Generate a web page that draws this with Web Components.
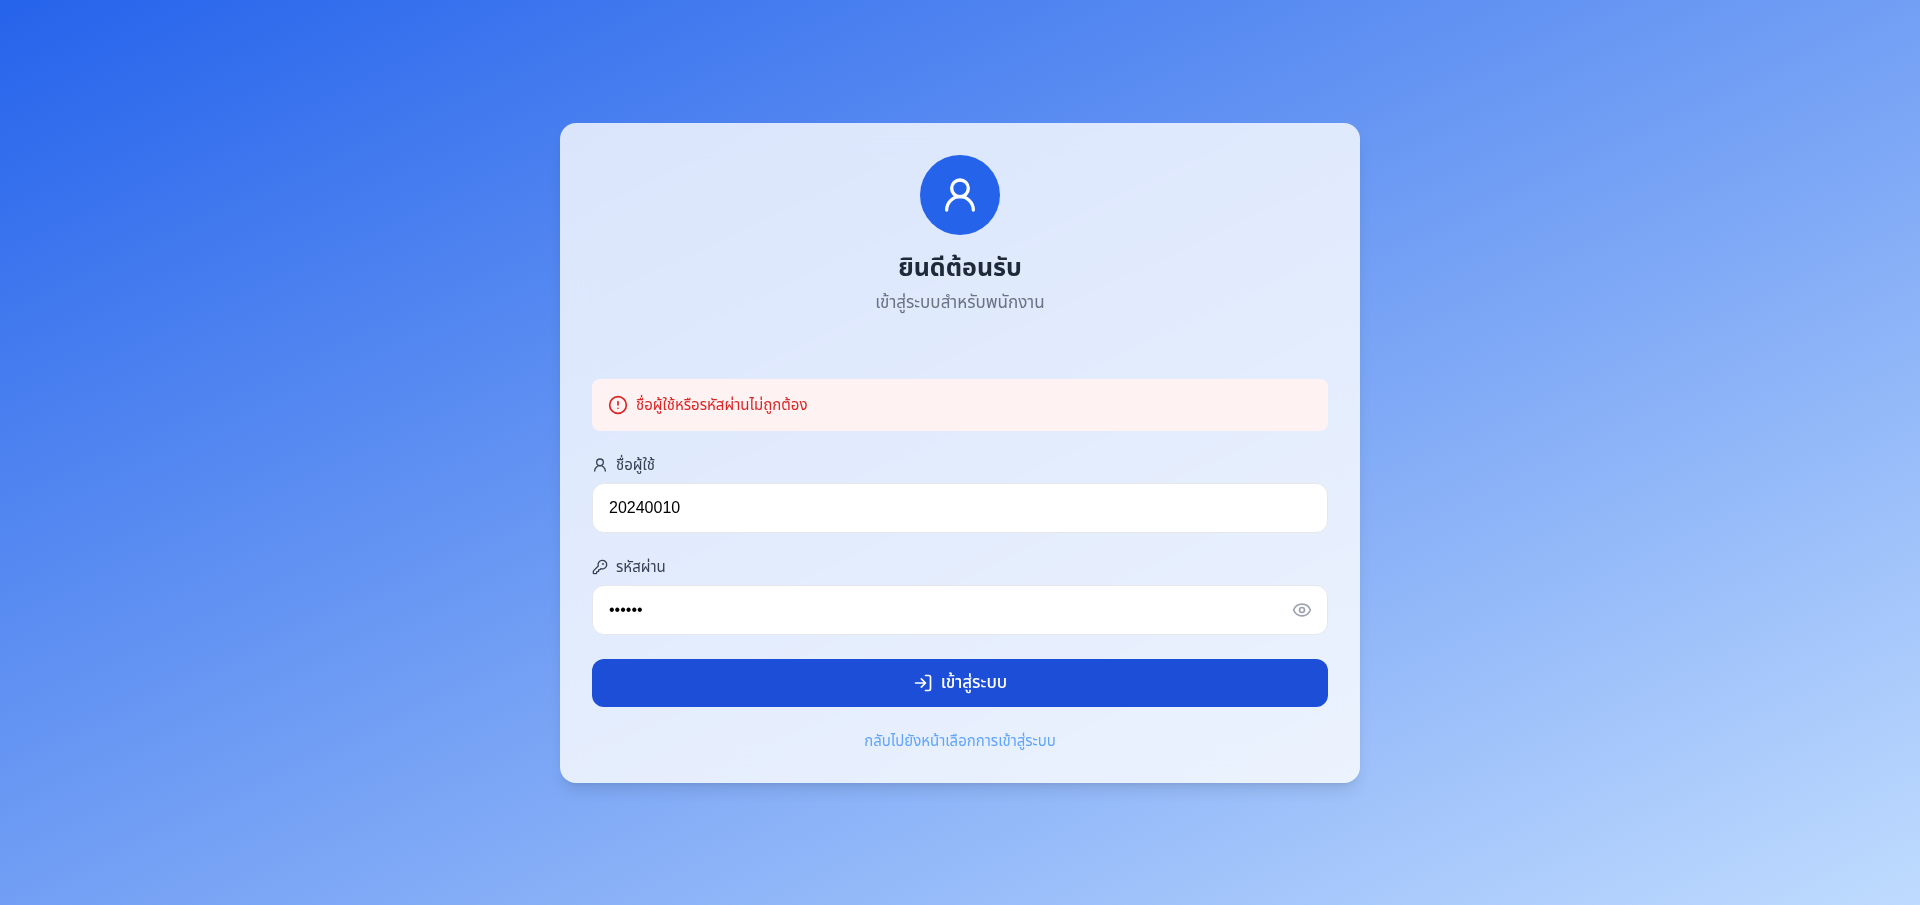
<!DOCTYPE html>
<html lang="th">
<head>
<meta charset="utf-8">
<meta name="viewport" content="width=device-width, initial-scale=1">
<title>เข้าสู่ระบบ</title>
<style>
body { margin: 0; font-family: "Liberation Sans", "Noto Sans Thai", sans-serif; font-size: 17px; line-height: 24px; color: #000; }
</style>
</head>
<body>
<login-page></login-page>
<script>
const ICONS = {
  user: '<circle cx="12" cy="8" r="5"/><path d="M20 21a8 8 0 0 0-16 0"/>',
  alert: '<circle cx="12" cy="12" r="10"/><path d="M12 8v4M12 16h.01"/>',
  key: '<path d="M2.586 17.414A2 2 0 0 0 2 18.828V21a1 1 0 0 0 1 1h3a1 1 0 0 0 1-1v-1a1 1 0 0 1 1-1h1a1 1 0 0 0 1-1v-1a1 1 0 0 1 1-1h.172a2 2 0 0 0 1.414-.586l.814-.814a6.5 6.5 0 1 0-4-4z"/><circle cx="16.5" cy="7.5" r=".5" fill="currentColor"/>',
  login: '<path d="M15 3h4a2 2 0 0 1 2 2v14a2 2 0 0 1-2 2h-4M10 17l5-5-5-5M15 12H3"/>',
  eye: '<path d="M2.062 12.348a1 1 0 0 1 0-.696 10.75 10.75 0 0 1 19.876 0 1 1 0 0 1 0 .696 10.75 10.75 0 0 1-19.876 0"/><circle cx="12" cy="12" r="3"/>'
};

class LineIcon extends HTMLElement {
  connectedCallback() {
    if (this.shadowRoot) return;
    this.attachShadow({ mode: 'open' }).innerHTML = `
      <style>
        :host { display: block; flex: none; width: var(--icon-size, 20px); height: var(--icon-size, 20px); }
        svg { display: block; width: 100%; height: 100%; }
      </style>
      <svg viewBox="0 0 24 24" fill="none" stroke="currentColor" stroke-width="2" stroke-linecap="round" stroke-linejoin="round" aria-hidden="true">${ICONS[this.getAttribute('name')]}</svg>`;
  }
}

class AlertBox extends HTMLElement {
  connectedCallback() {
    if (this.shadowRoot) return;
    this.attachShadow({ mode: 'open' }).innerHTML = `
      <style>
        :host { display: flex; align-items: center; gap: 8px; padding: 16px; border-radius: 8px;
                background: #fef2f2; color: #dc2626; font-size: 15px; line-height: 20px; }
      </style>
      <line-icon name="alert"></line-icon><span role="alert"><slot></slot></span>`;
  }
}

class TextField extends HTMLElement {
  connectedCallback() {
    if (this.shadowRoot) return;
    const type = this.getAttribute('type');
    const secret = type === 'password';
    this.attachShadow({ mode: 'open' }).innerHTML = `
      <style>
        :host { display: block; }
        label { display: flex; align-items: center; gap: 8px; margin-bottom: 8px; color: #374151;
                font-size: 15px; line-height: 20px; --icon-size: 16px; }
        .box { position: relative; }
        input { display: block; box-sizing: border-box; width: 100%; padding: 12px 16px; border: 1px solid #e5e7eb;
                border-radius: 12px; background: #fff; color: #000; font: inherit; font-size: 16px; outline: none; }
        input[type=password] { padding-right: 48px; }
        button { position: absolute; inset: 0 16px 0 auto; display: flex; align-items: center; padding: 0;
                 border: 0; background: none; color: #9ca3af; cursor: pointer; }
      </style>
      <label for="field"><line-icon name="${this.getAttribute('icon')}"></line-icon><slot></slot></label>
      <div class="box">
        <input id="field" type="${type}" value="${this.getAttribute('value')}" aria-label="${this.textContent}">
        ${secret ? '<button type="button" aria-label="แสดงรหัสผ่าน"><line-icon name="eye"></line-icon></button>' : ''}
      </div>`;
    if (secret) {
      const input = this.shadowRoot.querySelector('input');
      this.shadowRoot.querySelector('button').onclick = () => { input.type = input.type === 'password' ? 'text' : 'password'; };
    }
  }
}

class SubmitButton extends HTMLElement {
  connectedCallback() {
    if (this.shadowRoot) return;
    this.attachShadow({ mode: 'open' }).innerHTML = `
      <style>
        :host { display: block; }
        button { display: flex; align-items: center; justify-content: center; gap: 8px; width: 100%; padding: 12px 16px;
                 border: 0; border-radius: 12px; background: #1d4ed8; color: #fff; font: inherit; font-weight: 500; cursor: pointer; }
      </style>
      <button type="submit"><line-icon name="login"></line-icon><slot></slot></button>`;
  }
}

class LoginCard extends HTMLElement {
  connectedCallback() {
    if (this.shadowRoot) return;
    this.attachShadow({ mode: 'open' }).innerHTML = `
      <style>
        :host { display: block; box-sizing: border-box; width: 100%; max-width: 800px; padding: 32px; border-radius: 16px;
                background: rgba(255, 255, 255, .8); backdrop-filter: blur(16px);
                box-shadow: 0 10px 15px -3px rgba(0, 0, 0, .1), 0 4px 6px -4px rgba(0, 0, 0, .1); }
        header { display: flex; flex-direction: column; align-items: center; margin-bottom: 64px; text-align: center; }
        .avatar { display: grid; place-items: center; width: 80px; height: 80px; margin-bottom: 16px; border-radius: 50%;
                  background: #2563eb; color: #fff; --icon-size: 40px; }
        h1 { margin: 0 0 8px; color: #1f2937; font-size: 25px; line-height: 32px; font-weight: 700; }
        p { margin: 0; color: #6b7280; }
        form { display: flex; flex-direction: column; gap: 24px; }
        a { align-self: center; color: #60a5fa; font-size: 15px; line-height: 20px; text-decoration: none; }
      </style>
      <header>
        <div class="avatar"><line-icon name="user"></line-icon></div>
        <h1>ยินดีต้อนรับ</h1>
        <p>เข้าสู่ระบบสำหรับพนักงาน</p>
      </header>
      <form onsubmit="return false">
        <alert-box>ชื่อผู้ใช้หรือรหัสผ่านไม่ถูกต้อง</alert-box>
        <text-field type="text" icon="user" value="20240010">ชื่อผู้ใช้</text-field>
        <text-field type="password" icon="key" value="123456">รหัสผ่าน</text-field>
        <submit-button>เข้าสู่ระบบ</submit-button>
        <a href="#">กลับไปยังหน้าเลือกการเข้าสู่ระบบ</a>
      </form>`;
  }
}

class LoginPage extends HTMLElement {
  connectedCallback() {
    if (this.shadowRoot) return;
    this.attachShadow({ mode: 'open' }).innerHTML = `
      <style>
        :host { display: flex; align-items: center; justify-content: center; box-sizing: border-box; min-height: 100vh; padding: 16px;
                background: linear-gradient(to bottom right, #2563eb, #bfdbfe); }
      </style>
      <login-card></login-card>`;
  }
}

customElements.define('line-icon', LineIcon);
customElements.define('alert-box', AlertBox);
customElements.define('text-field', TextField);
customElements.define('submit-button', SubmitButton);
customElements.define('login-card', LoginCard);
customElements.define('login-page', LoginPage);
</script>
</body>
</html>
